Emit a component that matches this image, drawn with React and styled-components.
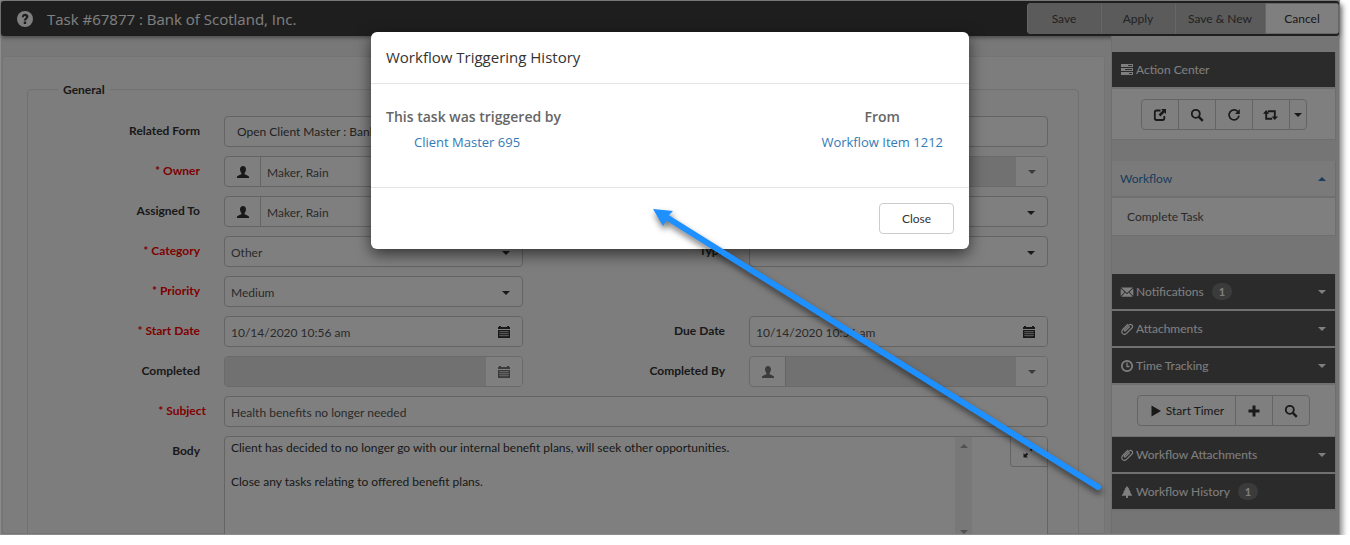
import React from "react";
import styled, { createGlobalStyle, css } from "styled-components";

const Global = createGlobalStyle`
  * { box-sizing: border-box; }
  html, body { margin: 0; background: #fff; overflow: hidden; }
  body, button, input, select, textarea {
    font-family: Lato, "Open Sans", sans-serif;
    font-size: 12px;
    line-height: 17px;
  }
  svg { display: block; flex: none; }
`;

/* ---------- window ---------- */

const Window = styled.div`
  position: relative;
  display: flex;
  flex-direction: column;
  height: calc(100vh - 10px);
  margin-right: 10px;
  border: 1px solid #8c8c8c;
  background: #f0f0f0;
  box-shadow: 4px 4px 5px -1px rgba(0, 0, 0, 0.4);
`;

const Topbar = styled.header`
  display: flex;
  align-items: center;
  flex: none;
  height: 35px;
  padding-left: 16px;
  background: #3d3d3d;
  color: #fff;
  border-radius: 3px;
  box-shadow: 0 1px 5px rgba(0, 0, 0, 0.5);
`;

const Title = styled.h1`
  flex: 1;
  margin: 0 0 0 14px;
  font-family: "Open Sans", sans-serif;
  font-size: 15px;
  line-height: 20px;
  font-weight: 400;
`;

const TopActions = styled.div`
  display: flex;
  height: 31px;
  border-radius: 4px;
  overflow: hidden;
`;

const TopButton = styled.button`
  width: ${(p) => (p.$wide ? 90 : 74)}px;
  padding: 0;
  border: 1px solid ${(p) => (p.$active ? "#ccc" : "#b4b4b4")};
  border-left-color: #ccc;
  background: ${(p) => (p.$active ? "#fff" : "#b6b6b6")};
  color: ${(p) => (p.$active ? "#333" : "#444")};
`;

const Columns = styled.div`
  display: flex;
  flex: 1;
  min-height: 0;
  overflow: hidden;
`;

/* ---------- form ---------- */

const FormPanel = styled.main`
  flex: 1;
  min-width: 0;
  margin: 20px 6px 0 1px;
  padding: 24px 25px 0 24px;
  border: 1px solid #e8e8e8;
  border-radius: 3px;
  background: #fafafa;
`;

const General = styled.fieldset`
  min-width: 0;
  min-height: 600px;
  margin: 0;
  padding: 18px 30px 0 0;
  border: 1px solid #e0e0e0;
  border-radius: 4px;
`;

const Legend = styled.legend`
  margin-left: 30px;
  padding: 0 5px;
  color: #333;
  font-weight: 700;
`;

const Grid = styled.div`
  display: grid;
  grid-template-columns: 172px 1fr 178px 1fr;
  column-gap: 24px;
  row-gap: 9px;
`;

const Label = styled.label`
  padding-top: 6px;
  text-align: right;
  font-weight: 700;
  color: ${(p) => (p.$required ? "#f00" : "#333")};
  ${(p) => p.$flush && css`margin-right: -6px;`}
`;

const Field = styled.div`
  position: relative;
  display: flex;
  height: 31px;
  overflow: hidden;
  border: 1px solid ${(p) => (p.$disabled ? "#d4d4d4" : "#c8c8c8")};
  border-radius: 4px;
  background: #fff;
  ${(p) => p.$wide && css`grid-column: 2 / -1;`}
  ${(p) => p.$last && css`grid-column: 4;`}
`;

const controlStyle = css`
  flex: 1;
  min-width: 0;
  padding: 2px 6px 0;
  border: 0;
  outline: 0;
  appearance: none;
  background: transparent;
  color: #555;
  &:disabled { background: #e2e2e2; opacity: 1; }
`;

const Input = styled.input`${controlStyle}`;
const Select = styled.select`${controlStyle}`;

const FormLink = styled.button`
  flex: 1;
  padding: 0 12px;
  border: 0;
  background: transparent;
  color: #444;
  text-align: left;
`;

const Addon = styled.span`
  display: flex;
  align-items: center;
  justify-content: center;
  width: 36px;
  border-right: 1px solid #c8c8c8;
  color: ${(p) => (p.$dim ? "#777" : "#333")};
`;

const AddonButton = styled.button`
  display: flex;
  align-items: center;
  justify-content: center;
  width: ${(p) => (p.$caret ? 31 : 36)}px;
  padding: 0;
  border: 0;
  background: #fff;
  color: ${(p) => (p.$dim ? "#777" : "#333")};
`;

const Caret = styled.span`
  display: block;
  width: 0;
  height: 0;
  border: 4px solid transparent;
  ${(p) =>
    p.$up
      ? css`border-bottom-color: currentColor; border-top-width: 0;`
      : css`border-top-color: currentColor; border-bottom-width: 0;`}
`;

const SelectCaret = styled(Caret)`
  position: absolute;
  right: 12px;
  top: 14px;
  color: #333;
  pointer-events: none;
`;

const BodyBox = styled.div`
  grid-column: 2 / -1;
  display: flex;
  align-items: flex-start;
  min-height: 200px;
  border: 1px solid #c8c8c8;
  border-radius: 4px;
  background: #fff;
`;

const BodyText = styled.textarea`
  flex: 1;
  height: 104px;
  padding: 2px 6px;
  border: 0;
  outline: 0;
  resize: none;
  overflow: hidden;
  background: transparent;
  color: #333;
`;

const Scrollbar = styled.div`
  display: flex;
  flex-direction: column;
  align-items: center;
  justify-content: space-between;
  width: 17px;
  height: 104px;
  margin-right: 38px;
  padding: 7px 0;
  background: #f1f1f1;
  color: #a3a3a3;
`;

const ExpandButton = styled.button`
  display: flex;
  align-items: center;
  justify-content: center;
  width: 37px;
  height: 30px;
  padding: 0;
  border: 1px solid #c8c8c8;
  border-width: 0 0 1px 1px;
  border-radius: 0 4px 0 4px;
  background: #fff;
  color: #333;
`;

/* ---------- sidebar ---------- */

const Sidebar = styled.aside`
  width: 228px;
  flex: none;
  padding: 16px 3px 0 0;
  border-left: 1px solid #dcdcdc;
  background: #eaeaea;
`;

const Panel = styled.section`
  margin-bottom: ${(p) => p.$gap || 0}px;
  border-right: 1px solid #dcdcdc;
`;

const panelHead = css`
  display: flex;
  align-items: center;
  gap: 2px;
  width: 100%;
  height: 37px;
  margin: 0;
  padding: 0 9px 0 8px;
  border: 0;
  border-bottom: 2px solid #e0e0e0;
  font-size: 12px;
  font-weight: 400;
  line-height: 17px;
  text-align: left;
  ${(p) =>
    p.$light
      ? css`background: #f5f5f5; color: #337ab7;`
      : css`background: #565656; color: #fff;`}
`;

const PanelTitle = styled.h2`${panelHead}`;
const PanelToggle = styled.button`${panelHead}`;

const PanelName = styled.span`
  flex: ${(p) => (p.$badge ? "none" : 1)};
`;

const Badge = styled.span`
  margin: 0 auto 0 6px;
  padding: 0 7px;
  border-radius: 9px;
  background: #777;
  color: #fff;
  font-size: 11px;
  font-weight: 700;
`;

const Tools = styled.div`
  display: flex;
  justify-content: center;
  height: ${(p) => (p.$tall ? 52 : 51)}px;
  padding-top: 10px;
  border-bottom: 1px solid #dcdcdc;
  background: #fff;
`;

const ToolButton = styled.button`
  display: flex;
  align-items: center;
  justify-content: center;
  gap: 3px;
  width: ${(p) => p.$width || 38}px;
  height: 31px;
  margin-left: -1px;
  padding: 0;
  border: 1px solid #c8c8c8;
  background: #fff;
  color: #333;
  &:first-child { border-radius: 4px 0 0 4px; margin-left: 0; }
  &:last-child { border-radius: 0 4px 4px 0; }
`;

const MenuItem = styled.a`
  display: block;
  height: 38px;
  padding: 10px 15px;
  border-bottom: 1px solid #dcdcdc;
  background: #fff;
  color: #555;
  text-decoration: none;
`;

/* ---------- dialog ---------- */

const Backdrop = styled.div`
  position: absolute;
  inset: 0;
  padding: 31px 0;
  background: rgba(0, 0, 0, 0.5);
`;

const Dialog = styled.div`
  max-width: 598px;
  margin: 0 auto;
  border-radius: 6px;
  background: #fff;
  box-shadow: 0 5px 15px rgba(0, 0, 0, 0.6);
  font-family: "Open Sans", sans-serif;
`;

const DialogTitle = styled.h2`
  margin: 0;
  padding: 15px;
  border-bottom: 1px solid #e5e5e5;
  color: #333;
  font-size: 15px;
  line-height: 21px;
  font-weight: 500;
`;

const DialogBody = styled.div`
  display: flex;
  justify-content: space-between;
  height: 104px;
  padding: 23px 26px 0 15px;
  border-bottom: 1px solid #e5e5e5;
`;

const Source = styled.div`
  display: flex;
  flex-direction: column;
  align-items: ${(p) => (p.$centered ? "center" : "flex-start")};
  gap: 5px;
`;

const SourceTitle = styled.strong`
  color: #666;
  font-size: 14px;
  line-height: 20px;
  font-weight: 600;
`;

const SourceLink = styled.a`
  margin-left: ${(p) => (p.$indent ? 28 : 0)}px;
  color: #337ab7;
  font-size: 13px;
  line-height: 20px;
  text-decoration: none;
`;

const DialogFooter = styled.div`
  display: flex;
  justify-content: flex-end;
  padding: 15px;
`;

const CloseButton = styled.button`
  width: 75px;
  height: 31px;
  padding: 0;
  border: 1px solid #ccc;
  border-radius: 4px;
  background: #fff;
  color: #333;
`;

const Pointer = styled.svg`
  position: absolute;
  left: 640px;
  top: 200px;
  pointer-events: none;
  filter: drop-shadow(1px 4px 3px rgba(0, 0, 0, 0.55));
`;

/* ---------- icons ---------- */

const shapes = {
  help: (
    <>
      <circle cx="7" cy="7" r="7" />
      <path d="M4.200 5.400C4.300 3.500 5.500 2.500 7.100 2.500c1.700 0 2.900 1 2.900 2.500 0 1.800-2 2-2 3.400H5.900c0-2 1.900-2.200 1.900-3.200 0-.5-.3-.8-.8-.8-.6 0-.9.4-.9 1zM5.900 9.200H8v2.100H5.900z" fill="#3d3d3d" />
    </>
  ),
  user: <path d="M7 1c1.900 0 3 1.400 3 3.300 0 1.500-.6 2.900-1.400 3.600v1.300c1.800.8 4 1.500 4.400 2.500.1.400.1.900.1 1.300H.9c0-.4 0-.9.1-1.300.4-1 2.600-1.700 4.400-2.500V7.900C4.600 7.200 4 5.800 4 4.300 4 2.400 5.100 1 7 1z" />,
  calendar: (
    <>
      <path d="M1 2h1V1h2v1h6V1h2v1h1v2H1zM1 5h12v8H1z" />
      <path d="M2 6.500h10M2 8.500h10M2 10.500h10" stroke="#fff" strokeWidth=".5" />
      <path d="M4 6v6M6 6v6M8 6v6M10 6v6" stroke="#fff" strokeWidth=".3" />
    </>
  ),
  external: (
    <>
      <path d="M7.500 2.500h-4a1.700 1.700 0 0 0-1.700 1.700v6.100A1.700 1.700 0 0 0 3.500 12h6.100a1.700 1.700 0 0 0 1.700-1.700V8" fill="none" stroke="currentColor" strokeWidth="1.800" />
      <path d="M8 1h5v5l-1.600-1.600-4 4-1.800-1.800 4-4z" />
    </>
  ),
  search: (
    <>
      <circle cx="5.800" cy="5.800" r="4" fill="none" stroke="currentColor" strokeWidth="1.800" />
      <path d="M8.800 8.800l4 4" stroke="currentColor" strokeWidth="2.400" />
    </>
  ),
  repeat: (
    <>
      <path d="M10.800 3.500A5 5 0 1 0 12 7.600" fill="none" stroke="currentColor" strokeWidth="1.700" />
      <path d="M12.800 1v5H8z" />
    </>
  ),
  retweet: (
    <>
      <path d="M3.200 5v5.700h6M5 3.300h6.800V9" fill="none" stroke="currentColor" strokeWidth="1.900" />
      <path d="M0 5.800L3.200 2l3.200 3.800zM8.600 8.400L11.800 12 15 8.400z" />
    </>
  ),
  tasks: (
    <>
      <path d="M1 1h12v3H1zM1 5h12v3H1zM1 9h12v3H1z" />
      <path d="M8 2.500h4M5 6.500h7M9 10.500h3" stroke="#565656" strokeWidth="1" />
    </>
  ),
  envelope: <path d="M1 2.500h12L7 8zM.7 3.500L4.500 7 .7 11zM13.300 3.500V11L9.500 7zM5.200 7.600L7 9.300l1.800-1.700 3.900 4.200H1.300z" />,
  clip: <path d="M9.700 4.500L5.600 8.700c-.8.800-1.900-.2-1.100-1.100l4.400-4.500c2-2 4.900.8 3 2.900l-5.300 5.400c-2.700 2.600-6.600-.9-4-3.700L7.900 2.200" fill="none" stroke="currentColor" strokeWidth="1.200" />,
  clock: (
    <>
      <circle cx="7" cy="7" r="5.200" fill="none" stroke="currentColor" strokeWidth="1.700" />
      <path d="M7 3.500v4H4.500" fill="none" stroke="currentColor" strokeWidth="1.300" transform="matrix(-1 0 0 1 14 0)" />
    </>
  ),
  tree: <path d="M7 1l2.600 3.400H8.800l2 2.700H10l2.400 3.600H8v2.300H6v-2.300H1.600L4 7.100h-.8l2-2.700h-.8z" />,
  play: <path d="M2.500 1.500L12 7l-9.500 5.500z" />,
  plus: <path d="M5.500 1.500h3v4h4v3h-4v4h-3v-4h-4v-3h4z" />,
  expand: <path d="M8 1.500h4.500V6L11 4.500 9.300 6.200 7.800 4.700 9.500 3zM1.500 8L3 9.500l1.700-1.700 1.500 1.500L4.500 11 6 12.500H1.500z" />,
};

const Icon = ({ name, size = 14 }) => (
  <svg width={name === "retweet" ? 15 : size} height={size} viewBox={name === "retweet" ? "0 0 15 14" : "0 0 14 14"} fill="currentColor" aria-hidden="true">
    {shapes[name]}
  </svg>
);

/* ---------- composed fields ---------- */

const PersonField = ({ id, value, last, disabled, label }) => (
  <Field $last={last} $disabled={disabled}>
    <Addon $dim={disabled}><Icon name="user" /></Addon>
    <Input id={id} aria-label={label} defaultValue={value} disabled={disabled} />
    <AddonButton $caret $dim={disabled} disabled={disabled} aria-label="Choose person"><Caret /></AddonButton>
  </Field>
);

const SelectField = ({ id, value, last, label }) => (
  <Field $last={last}>
    <Select id={id} aria-label={label} defaultValue={value}>
      <option>{value}</option>
    </Select>
    <SelectCaret />
  </Field>
);

const DateField = ({ id, value, disabled }) => (
  <Field $disabled={disabled}>
    <Input id={id} defaultValue={value} disabled={disabled} />
    <AddonButton $dim={disabled} disabled={disabled} aria-label="Choose date"><Icon name="calendar" /></AddonButton>
  </Field>
);

const SidePanel = ({ icon, name, badge, caret = true, children }) => (
  <Panel>
    <PanelToggle type="button">
      <Icon name={icon} />
      <PanelName $badge={badge}>{name}</PanelName>
      {badge && <Badge>{badge}</Badge>}
      {caret && <Caret />}
    </PanelToggle>
    {children}
  </Panel>
);

const bodyText =
  "Client has decided to no longer go with our internal benefit plans, will seek other opportunities.\n\nClose any tasks relating to offered benefit plans.";

export default function App() {
  return (
    <>
      <Global />
      <Window>
        <Topbar>
          <Icon name="help" size={16} />
          <Title>Task #67877 : Bank of Scotland, Inc.</Title>
          <TopActions>
            <TopButton>Save</TopButton>
            <TopButton>Apply</TopButton>
            <TopButton $wide>Save &amp; New</TopButton>
            <TopButton $active>Cancel</TopButton>
          </TopActions>
        </Topbar>

        <Columns>
          <FormPanel>
            <General>
              <Legend>General</Legend>
              <Grid>
                <Label htmlFor="form">Related Form</Label>
                <Field $wide><FormLink id="form">Open Client Master : Bank</FormLink></Field>

                <Label htmlFor="owner" $required>* Owner</Label>
                <PersonField id="owner" value="Maker, Rain" />
                <PersonField last disabled label="Second owner" />

                <Label htmlFor="assigned">Assigned To</Label>
                <PersonField id="assigned" value="Maker, Rain" />
                <SelectField last value="" label="Second assignee" />

                <Label htmlFor="category" $required>* Category</Label>
                <SelectField id="category" value="Other" />
                <Label htmlFor="type">Type</Label>
                <SelectField id="type" value="" />

                <Label htmlFor="priority" $required>* Priority</Label>
                <SelectField id="priority" value="Medium" />
                <span />
                <span />

                <Label htmlFor="start" $required>* Start Date</Label>
                <DateField id="start" value="10/14/2020 10:56 am" />
                <Label htmlFor="due">Due Date</Label>
                <DateField id="due" value="10/14/2020 10:56 am" />

                <Label htmlFor="completed">Completed</Label>
                <DateField id="completed" disabled />
                <Label htmlFor="completedBy">Completed By</Label>
                <PersonField id="completedBy" disabled />

                <Label htmlFor="subject" $required $flush>* Subject</Label>
                <Field $wide><Input id="subject" defaultValue="Health benefits no longer needed" /></Field>

                <Label htmlFor="body">Body</Label>
                <BodyBox>
                  <BodyText id="body" defaultValue={bodyText} />
                  <Scrollbar><Caret $up /><Caret /></Scrollbar>
                  <ExpandButton aria-label="Expand"><Icon name="expand" /></ExpandButton>
                </BodyBox>
              </Grid>
            </General>
          </FormPanel>

          <Sidebar>
            <Panel $gap={21}>
              <PanelTitle><Icon name="tasks" />Action Center</PanelTitle>
              <Tools>
                <ToolButton aria-label="Open"><Icon name="external" /></ToolButton>
                <ToolButton aria-label="Search"><Icon name="search" /></ToolButton>
                <ToolButton aria-label="Refresh"><Icon name="repeat" /></ToolButton>
                <ToolButton aria-label="Repeat"><Icon name="retweet" /></ToolButton>
                <ToolButton $width={18} aria-label="More"><Caret /></ToolButton>
              </Tools>
            </Panel>
            <Panel $gap={38}>
              <PanelToggle $light type="button"><PanelName>Workflow</PanelName><Caret $up /></PanelToggle>
              <MenuItem href="#complete">Complete Task</MenuItem>
            </Panel>
            <SidePanel icon="envelope" name="Notifications" badge="1" />
            <SidePanel icon="clip" name="Attachments" />
            <SidePanel icon="clock" name="Time Tracking">
              <Tools $tall>
                <ToolButton $width={99}><Icon name="play" />Start Timer</ToolButton>
                <ToolButton aria-label="Add"><Icon name="plus" /></ToolButton>
                <ToolButton aria-label="Search"><Icon name="search" /></ToolButton>
              </Tools>
            </SidePanel>
            <SidePanel icon="clip" name="Workflow Attachments" />
            <SidePanel icon="tree" name="Workflow History" badge="1" caret={false} />
          </Sidebar>
        </Columns>

        <Backdrop>
          <Dialog role="dialog" aria-labelledby="history-title">
            <DialogTitle id="history-title">Workflow Triggering History</DialogTitle>
            <DialogBody>
              <Source>
                <SourceTitle>This task was triggered by</SourceTitle>
                <SourceLink $indent href="#client">Client Master 695</SourceLink>
              </Source>
              <Source $centered>
                <SourceTitle>From</SourceTitle>
                <SourceLink href="#item">Workflow Item 1212</SourceLink>
              </Source>
            </DialogBody>
            <DialogFooter>
              <CloseButton>Close</CloseButton>
            </DialogFooter>
          </Dialog>
        </Backdrop>

        <Pointer width="480" height="310" viewBox="0 0 480 310" aria-hidden="true">
          <path d="M22 14L457 286" stroke="#1e90ff" strokeWidth="6" strokeLinecap="round" />
          <path d="M12 8l20 2-5 5-1 3-4 7z" fill="#1e90ff" />
        </Pointer>
      </Window>
    </>
  );
}
